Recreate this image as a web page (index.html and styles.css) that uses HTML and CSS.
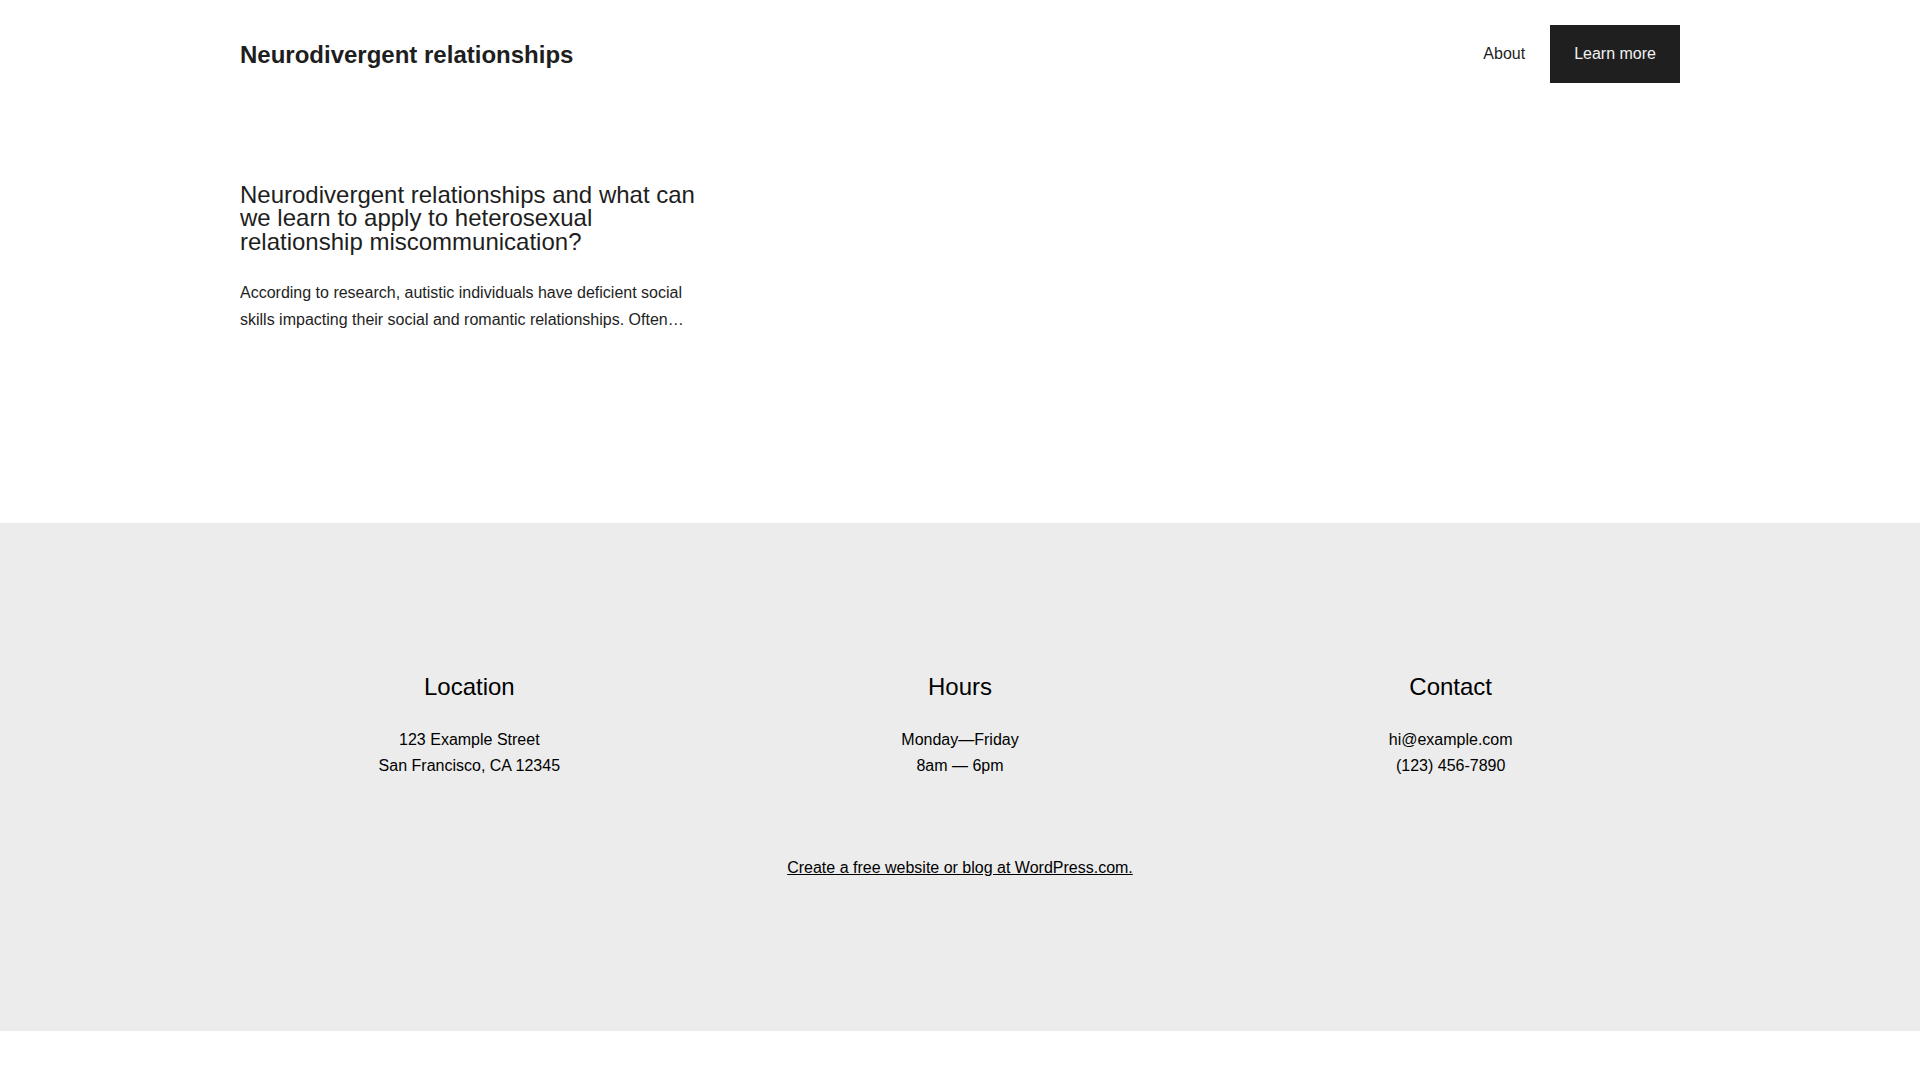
FILE: index.html
```html
<!DOCTYPE html>
<html lang="en">
<head>
<meta charset="utf-8">
<title>Neurodivergent relationships</title>
<link rel="stylesheet" href="styles.css">
</head>
<body>
<header class="site-header">
  <a class="site-title" href="#">Neurodivergent relationships</a>
  <nav class="site-nav">
    <a class="nav-link" href="#">About</a>
    <a class="nav-button" href="#">Learn more</a>
  </nav>
</header>
<main class="posts">
  <article class="post">
    <h2 class="post-title">Neurodivergent relationships and what can we learn to apply to heterosexual relationship miscommunication?</h2>
    <p class="post-excerpt">According to research, autistic individuals have deficient social skills impacting their social and romantic relationships. Often…</p>
  </article>
</main>
<footer class="site-footer">
  <div class="footer-columns">
    <div class="footer-col">
      <h3 class="footer-heading">Location</h3>
      <p class="footer-text">123 Example Street<br>San Francisco, CA 12345</p>
    </div>
    <div class="footer-col">
      <h3 class="footer-heading">Hours</h3>
      <p class="footer-text">Monday—Friday<br>8am — 6pm</p>
    </div>
    <div class="footer-col">
      <h3 class="footer-heading">Contact</h3>
      <p class="footer-text">hi@example.com<br>(123) 456-7890</p>
    </div>
  </div>
  <p class="footer-credit"><a href="#">Create a free website or blog at WordPress.com.</a></p>
</footer>
</body>
</html>
```
FILE: styles.css
```css
html, body {
  margin: 0;
  padding: 0;
  background: #ffffff;
}
body {
  font-family: "Liberation Sans", Arial, sans-serif;
  font-size: 16px;
  line-height: 1.6;
  color: #1e1e1e;
}
a {
  color: inherit;
}
.site-header {
  max-width: 1440px;
  margin: 0 auto;
  padding-top: 25px;
  display: flex;
  justify-content: space-between;
  align-items: center;
}
.site-title {
  font-size: 24px;
  font-weight: 700;
  line-height: 1.2;
  padding-top: 2px;
  text-decoration: none;
  color: #1e1e1e;
}
.site-nav {
  display: flex;
  align-items: center;
  gap: 25px;
}
.nav-link {
  text-decoration: none;
  font-size: 16px;
  line-height: 26px;
}
.nav-button {
  display: block;
  background: #1f1f1f;
  color: #f2f2f2;
  text-decoration: none;
  font-size: 16px;
  line-height: 26px;
  padding: 16px 24px;
}
.posts {
  max-width: 1440px;
  margin: 0 auto;
  padding: 100px 0 189px;
  display: grid;
  grid-template-columns: repeat(3, 1fr);
  column-gap: 32px;
}
.post-title {
  margin: 0 0 26px;
  font-size: 24px;
  font-weight: 400;
  line-height: 23.4px;
}
.post-excerpt {
  margin: 0;
  font-size: 16px;
  line-height: 27.2px;
}
.site-footer {
  background: #ececec;
  padding: 150px 0 151px;
  color: #000000;
}
.footer-columns {
  max-width: 1440px;
  margin: 0 auto;
  display: grid;
  grid-template-columns: repeat(3, 1fr);
  column-gap: 32px;
  text-align: center;
}
.footer-heading {
  margin: 0 0 26px;
  font-size: 24px;
  font-weight: 400;
  line-height: 28.8px;
}
.footer-text {
  margin: 0;
  font-size: 16px;
  line-height: 25.6px;
}
.footer-credit {
  margin: 76px 0 0;
  text-align: center;
  font-size: 16px;
  line-height: 25.6px;
}
.footer-credit a {
  color: #000000;
  text-decoration: underline;
}
```
